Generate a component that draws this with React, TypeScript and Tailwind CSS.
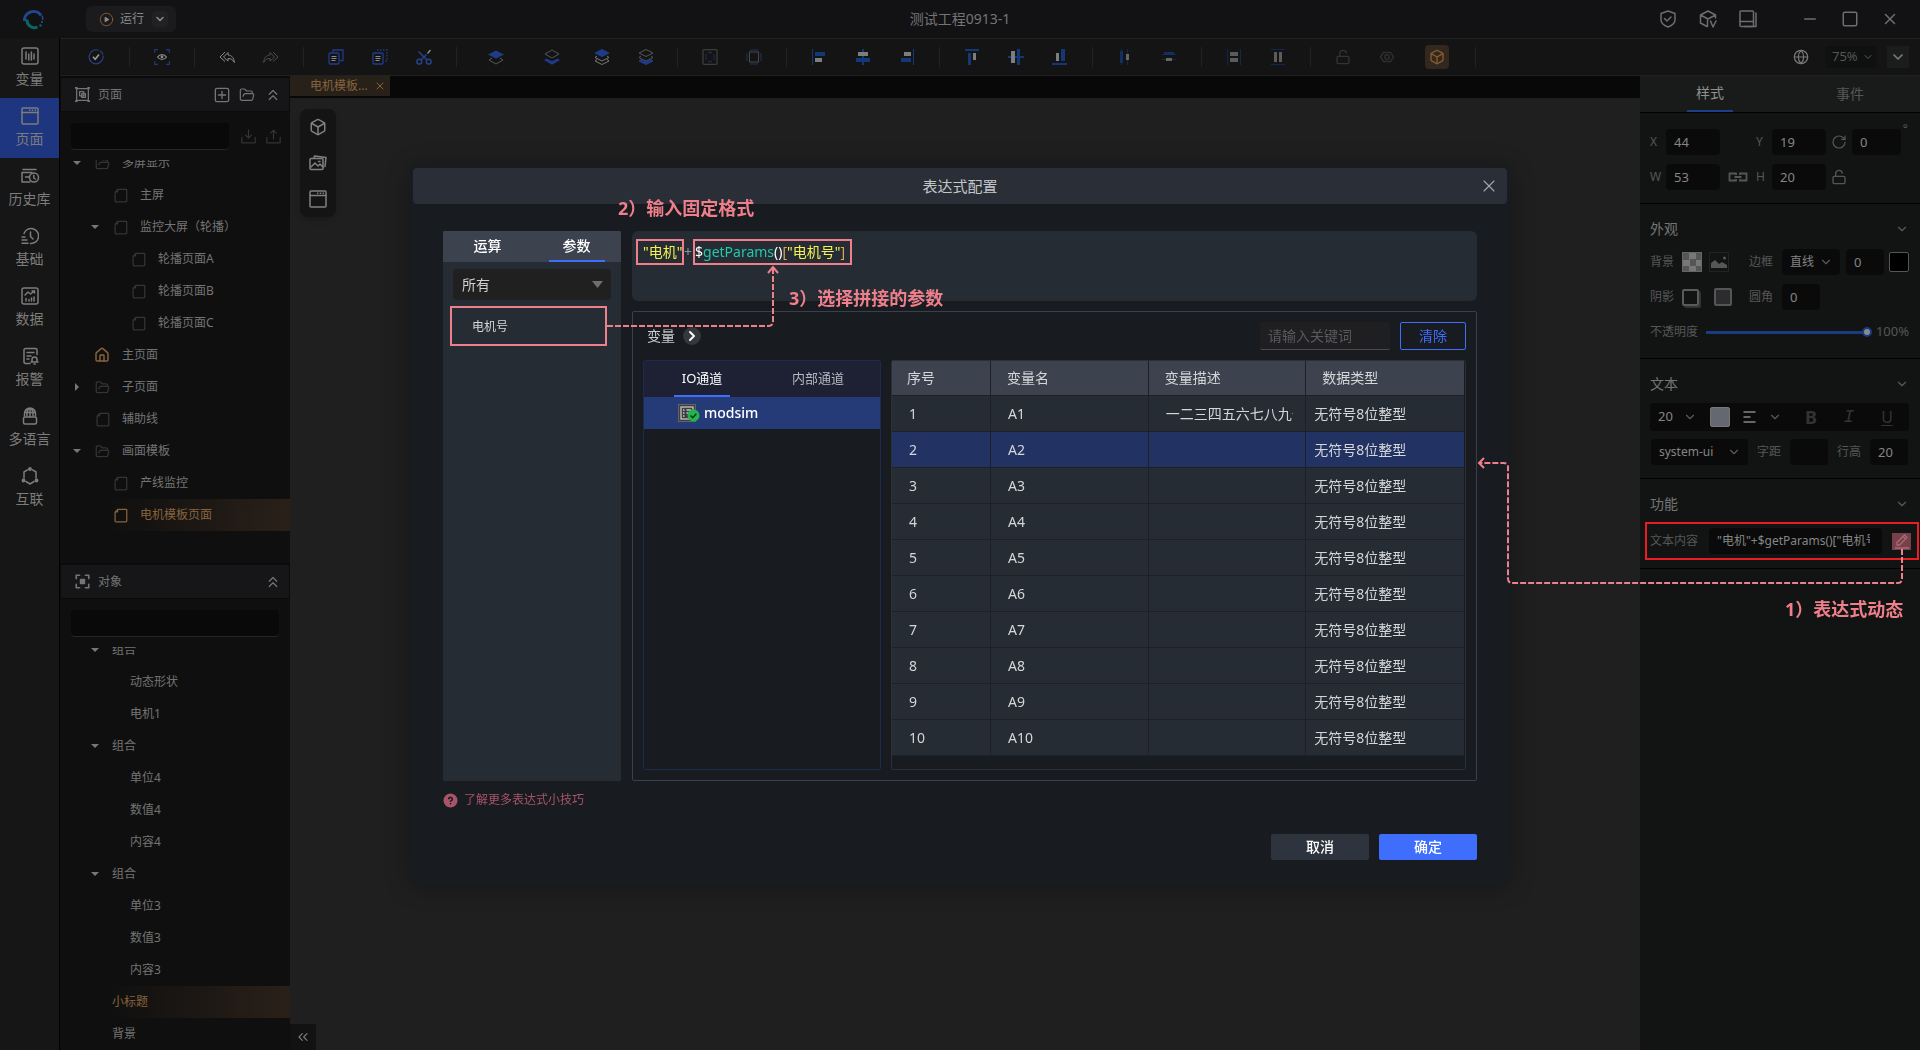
import React from "react";
import {
  Box,
  ChevronDown,
  ChevronRight,
  ChevronsLeft,
  ChevronsUp,
  CirclePlay,
  CircleHelp,
  FolderOpen,
  Globe,
  House,
  LockOpen,
  Minus,
  RotateCw,
  Square,
  X,
} from "lucide-react";

type Kids = { children?: React.ReactNode };

function Glyph({ children, className = "size-[18px]" }: Kids & { className?: string }) {
  return (
    <svg
      viewBox="0 0 18 18"
      className={className}
      fill="none"
      stroke="currentColor"
      strokeWidth="1.5"
      strokeLinecap="round"
      strokeLinejoin="round"
      aria-hidden="true"
    >
      {children}
    </svg>
  );
}

/* ---------- icons ---------- */

const PageGlyph = ({ className }: { className?: string }) => (
  <Glyph className={className}>
    <rect x="1" y="1" width="16" height="16" rx="1" />
    <path d="M1 5.5h16" />
    <path d="M8 3.3h7" strokeDasharray="1.4 1.4" strokeLinecap="butt" />
  </Glyph>
);

const VariableGlyph = () => (
  <Glyph>
    <rect x="1" y="1" width="16" height="16" rx="2" />
    <path d="M5 5v7M7.8 7v6M10.4 5v8M13 7v5" />
  </Glyph>
);

const HistoryGlyph = () => (
  <Glyph className="h-[18px] w-5">
    <path d="M2 2.500h13M1 5.500h10M1 5.500V15h8M4.500 10h3.500" />
    <circle cx="13" cy="10.500" r="4.500" />
    <path d="M12.800 8.300v2.700l1.500 1" />
  </Glyph>
);

const BaseGlyph = () => (
  <Glyph>
    <path d="M3 6.500A7.500 7.500 0 1 1 9.500 16.500" />
    <path d="M9.500 5v4.500l2.500 2.500M1 10h3M1 13h5M1 16.300h6" />
  </Glyph>
);

const DataGlyph = () => (
  <Glyph>
    <rect x="1" y="1" width="16" height="16" rx="2" />
    <path d="M4 8l3-3 2.500 2L13.500 4M11 4h2.500v2M5 14v-2.500M8 14v-1.500M10.500 14v-3M13 14v-4" />
  </Glyph>
);

const AlarmGlyph = () => (
  <Glyph>
    <path d="M16 7.500V3a1.500 1.500 0 0 0-1.500-1.500h-10A1.500 1.500 0 0 0 3 3v12a1.500 1.500 0 0 0 1.500 1.500H9M6 5.500h7M6 9h4M6 12h2" />
    <path d="M11 15v-2.500a2.500 2.500 0 0 1 5 0V15h1M10 15h7M13 17h1.200" />
  </Glyph>
);

const LanguageGlyph = () => (
  <Glyph>
    <path d="M3.500 9V6.500a5.500 5.500 0 0 1 11 0V9M9 1v9M6 9V6c0-2 1-4 3-5 2 1 3 3 3 5v3M4 5.500h10" />
    <rect x="2.500" y="10" width="13" height="7" rx="1.500" />
  </Glyph>
);

const ConnectGlyph = () => (
  <Glyph>
    <path d="M6.500 2.800L3 5v6M11.500 2.800L15 5v6M5 14.500L9 17l4-2.500" />
    <circle cx="9" cy="2" r="1.200" fill="currentColor" />
    <circle cx="2.500" cy="13.500" r="1.200" fill="currentColor" />
    <circle cx="15.500" cy="13.500" r="1.200" fill="currentColor" />
  </Glyph>
);

const FileGlyph = () => (
  <Glyph className="size-[15px]">
    <path d="M6 1.500h9.500a1 1 0 0 1 1 1v13a1 1 0 0 1-1 1h-12a1 1 0 0 1-1-1V5z" />
    <path d="M5.500 2v2.500H3" />
  </Glyph>
);

const PagesGlyph = () => (
  <Glyph className="size-[15px]">
    <path d="M2 2h14v14H2z" />
    <path d="M5.500 5.500h5v5h-5zM8 8h4.500v4.500H8z" />
    <path d="M1 1h1M16 1h1M1 17h1M16 17h1" strokeWidth="2.500" />
  </Glyph>
);

const FocusGlyph = () => (
  <Glyph className="size-[15px]">
    <path d="M1.500 5.500v-4h4M12.500 1.500h4v4M16.500 12.500v4h-4M5.500 16.500h-4v-4" strokeWidth="2" />
    <rect x="6.500" y="6.500" width="5" height="5" fill="currentColor" />
  </Glyph>
);

const TrayGlyph = ({ up = false }: { up?: boolean }) => (
  <Glyph className="size-[15px]">
    <path d="M1 10v6.500h16V10" />
    <path d={up ? "M9 12V2M5.500 5L9 1.500 12.500 5" : "M9 1v10M5.500 7.500L9 11l3.500-3.500"} />
  </Glyph>
);

const PlusBoxGlyph = () => (
  <Glyph className="size-4">
    <rect x="1.500" y="1.500" width="15" height="15" rx="2" />
    <path d="M9 5v8M5 9h8" />
  </Glyph>
);

const GalleryGlyph = () => (
  <Glyph className="size-[18px]">
    <path d="M5 4l.5-2 11.500 1.500-1 9" />
    <rect x="1" y="4.500" width="13" height="11" rx="1" />
    <path d="M2 13l4-4 3 3 2-2 3 3M9.500 7.500h1.500" />
  </Glyph>
);

const Mono = ({ children }: Kids) => (
  <svg viewBox="0 0 16 16" className="size-4" fill="none" aria-hidden="true">
    {children}
  </svg>
);

const top = "M8 0.500L15 4 8 7.500 1 4z";
const blue = "#1f3b8c";
const deep = "#123878";
const grey = "#7d7d7d";
const dim = "#10284f";

const LayerIcon = ({ kind }: { kind: 0 | 1 | 2 | 3 }) => (
  <Mono>
    {kind === 0 && (
      <>
        <path d="M8 1.500L16 5.500 8 9.500 0 5.500z" fill={blue} />
        <path d="M4 9L1 11l7 4 7-4-3-2" stroke="#555" />
      </>
    )}
    {kind === 1 && (
      <>
        <path d="M8 1l7 4-7 4-7-4z" stroke="#555" />
        <path d="M0 11l2.500-1.500L8 12.300l5.500-2.800L16 11l-8 4.800z" fill={blue} />
      </>
    )}
    {kind === 2 && (
      <>
        <path d={top} fill={blue} stroke={blue} />
        <path d="M3 7L1 8.500l7 3.500 7-3.500L13 7M3 10.500L1 12l7 3.500 7-3.500-2-1.500" stroke="#777" />
      </>
    )}
    {kind === 3 && (
      <>
        <path d={top} stroke="#555" />
        <path d="M3 7L1 8.500l7 3.500 7-3.500L13 7" stroke="#555" />
        <path d="M3 10.500L1 12l7 3.500 7-3.500-2-1.500-5 2.500z" fill={blue} stroke={blue} />
      </>
    )}
  </Mono>
);

/* Bars are [x, y, width, height, colour]. */
type Bar = [number, number, number, number, string];
const Bars = ({ bars }: { bars: Bar[] }) => (
  <Mono>
    {bars.map(([x, y, w, h, c], i) => (
      <rect key={i} x={x} y={y} width={w} height={h} fill={c} />
    ))}
  </Mono>
);

/* ---------- toolbar ---------- */

function Tool({ label, children, className = "w-11" }: Kids & { label: string; className?: string }) {
  return (
    <button type="button" aria-label={label} className={`flex h-6 shrink-0 items-center justify-center ${className}`}>
      {children}
    </button>
  );
}

const Group = ({ children }: Kids) => (
  <div className="flex h-5 shrink-0 items-center border-r border-[#222] px-2.5">{children}</div>
);

function Toolbar() {
  return (
    <div className="flex h-[38px] shrink-0 items-center border-y border-[#202020] bg-[#141414] pr-[11px]">
      <div className="ml-[3px] flex items-center">
        <Group>
          <Tool label="校验" className="w-[46px]">
            <Mono>
              <path d="M10.500 1.200A7 7 0 1 0 15 6.500" stroke="#27418a" strokeWidth="1.200" />
              <path d="M12 1.800A7 7 0 0 1 15 5.500" stroke="#27418a" strokeWidth="1.200" />
              <path d="M5 7.800l2.200 2.400L11 5.500" stroke="#999" strokeWidth="1.600" />
            </Mono>
          </Tool>
        </Group>
        <Group>
          <Tool label="预览">
            <Mono>
              <path d="M.7 4V.7H4M12 .7h3.300V4M15.300 12v3.300H12M4 15.300H.7V12" stroke="#22366e" strokeWidth="1.300" />
              <path d="M3.500 8c2.300-3.300 6.700-3.300 9 0-2.300 3.300-6.700 3.300-9 0z" stroke="#888" strokeWidth="1.200" />
              <circle cx="8" cy="8" r="1.400" fill="#888" />
            </Mono>
          </Tool>
        </Group>
        <Group>
          <Tool label="撤销">
            <Mono>
              <path d="M6 3L1 8l5 4.500M9 3.500L4.500 8 9 12V9.500c3 0 5 1 6.300 4C15 9 13 6.300 9 6z" stroke="#888" />
            </Mono>
          </Tool>
          <Tool label="重做">
            <Mono>
              <path d="M10 3l5 5-5 4.500M7 3.500L11.500 8 7 12V9.500c-3 0-5 1-6.300 4C1 9 3 6.300 7 6z" stroke="#4c4c4c" />
            </Mono>
          </Tool>
        </Group>
        <Group>
          <Tool label="复制">
            <Mono>
              <path d="M5 3.500V1h10v10.500h-3" stroke={blue} strokeWidth="1.300" />
              <rect x="1" y="4" width="10" height="11" rx="1" stroke={blue} strokeWidth="1.300" />
              <path d="M3.500 7.500h5M3.500 9.500h5M3.500 11.500h4" stroke="#888" />
            </Mono>
          </Tool>
          <Tool label="粘贴">
            <Mono>
              <path d="M5 1h10v11h-3" stroke={blue} strokeWidth="1.300" strokeDasharray="1.500 1.500" />
              <rect x="1" y="4" width="10" height="11" rx="1" stroke={blue} strokeWidth="1.300" />
              <path d="M3.500 7.500h5M3.500 9.500h5M3.500 11.500h4" stroke="#888" />
            </Mono>
          </Tool>
          <Tool label="剪切">
            <Mono>
              <path d="M2.500 2.500l8.500 8.500M5 11l5.500-5.500" stroke="#27418a" strokeWidth="1.500" />
              <path d="M11.500 4.500L14.500 1" stroke="#888" strokeWidth="1.500" />
              <circle cx="3.300" cy="12.700" r="2.400" stroke="#27418a" strokeWidth="1.500" />
              <circle cx="12.700" cy="12.700" r="2.400" stroke="#27418a" strokeWidth="1.500" />
            </Mono>
          </Tool>
        </Group>
        <Group>
          <Tool label="置顶" className="w-[58px]"><LayerIcon kind={0} /></Tool>
          <Tool label="置底" className="w-[54px]"><LayerIcon kind={1} /></Tool>
          <Tool label="上移一层" className="w-[46px]"><LayerIcon kind={2} /></Tool>
          <Tool label="下移一层" className="w-[42px]"><LayerIcon kind={3} /></Tool>
        </Group>
        <Group>
          <Tool label="组合">
            <Mono>
              <rect x="1" y=".7" width="14" height="14.600" rx="1" stroke="#3a3c3a" strokeWidth="1.300" />
              <path d="M6 3.500h4M6 12.500h4M4 5v1M12 5v1M4 10v1M12 10v1" stroke="#1b2a52" strokeWidth="1.300" />
              <path d="M4 6v4M12 6v4" stroke="#1b2a52" />
            </Mono>
          </Tool>
          <Tool label="取消组合">
            <Mono>
              <path d="M4 1h8M4 15h8M1 4v8M15 4v8" stroke="#18233f" strokeWidth="2" />
              <rect x="3.500" y="3" width="9" height="10" stroke="#4a4a40" />
            </Mono>
          </Tool>
        </Group>
        <Group>
          <Tool label="左对齐"><Bars bars={[[1, 0, 1, 16, deep], [4, 3, 10, 4, deep], [4, 9, 7, 4, grey]]} /></Tool>
          <Tool label="水平居中"><Bars bars={[[7, 0, 2, 16, deep], [3, 3, 10, 4, grey], [1, 9, 14, 4, deep]]} /></Tool>
          <Tool label="右对齐"><Bars bars={[[14, 0, 1, 16, deep], [5, 3, 7, 4, grey], [2, 9, 10, 4, deep]]} /></Tool>
        </Group>
        <Group>
          <Tool label="顶对齐"><Bars bars={[[1, 0, 14, 2, deep], [4, 4, 3, 12, deep], [9, 4, 3, 7, grey]]} /></Tool>
          <Tool label="垂直居中"><Bars bars={[[0, 7, 16, 2, deep], [3, 2, 4, 12, grey], [9, 0, 3, 16, deep]]} /></Tool>
          <Tool label="底对齐"><Bars bars={[[0, 14, 15, 2, deep], [4, 4, 3, 8, grey], [9, 0, 4, 12, deep]]} /></Tool>
        </Group>
        <Group>
          <Tool label="水平分布"><Bars bars={[[4, 0, 1, 16, dim], [3, 2, 3, 12, "#132e60"], [10, 0, 1, 16, dim], [9, 5, 3, 6, "#666"]]} /></Tool>
          <Tool label="垂直分布"><Bars bars={[[1, 5, 14, 1, dim], [3, 3, 10, 3, "#132e60"], [1, 10, 14, 1, dim], [5, 9, 6, 3, "#666"]]} /></Tool>
        </Group>
        <Group>
          <Tool label="等宽"><Bars bars={[[1, 0, 1, 16, dim], [14, 0, 1, 16, dim], [4, 3, 8, 4, "#5b5b5b"], [4, 9, 8, 4, "#5b5b5b"]]} /></Tool>
          <Tool label="等高"><Bars bars={[[1, 0, 14, 1, dim], [1, 15, 14, 1, dim], [4, 3, 3, 10, "#5b5b5b"], [9, 3, 3, 10, "#5b5b5b"]]} /></Tool>
        </Group>
        <Group>
          <Tool label="解锁"><LockOpen className="size-4 text-[#333]" strokeWidth={2} /></Tool>
          <Tool label="显示">
            <Mono>
              <path d="M1.500 8L4.500 3.500h7L14.500 8l-3 4.500h-7z" stroke="#2d2d30" strokeWidth="1.500" strokeLinejoin="round" />
              <circle cx="8" cy="8" r="2.300" stroke="#2d2d30" strokeWidth="1.500" />
            </Mono>
          </Tool>
          <Tool label="三维" className="w-14">
            <span className="flex size-6 items-center justify-center rounded bg-[#33281d] text-[#8a5c31]">
              <Box className="size-4" strokeWidth={2} />
            </span>
          </Tool>
        </Group>
      </div>
      <div className="ml-auto flex items-center">
        <button type="button" aria-label="语言" className="mr-4 text-[#7a7a7a]">
          <Globe className="size-4" strokeWidth={1.8} />
        </button>
        <Select
          label="缩放"
          value="75%"
          options={["75%", "100%"]}
          wrapper="mr-2.5"
          className="h-[22px] w-[52px] bg-[#0e1110] pl-[7px] text-[13px] text-[#565656]"
          chevron="size-3 right-[3px]"
        />
        <button type="button" aria-label="更多" className="flex size-[22px] items-center justify-center bg-[#1b1d1d] text-[#7a7a7a]">
          <ChevronDown className="size-4" strokeWidth={2.500} />
        </button>
      </div>
    </div>
  );
}

/* ---------- form controls ---------- */

function Select({
  label,
  value,
  options,
  className,
  wrapper = "",
  chevron = "size-3.5 right-[7px]",
}: {
  label: string;
  value: string;
  options: string[];
  className: string;
  wrapper?: string;
  chevron?: string;
}) {
  return (
    <span className={`relative inline-flex items-center ${wrapper}`}>
      <select aria-label={label} defaultValue={value} className={`appearance-none rounded outline-none ${className}`}>
        {options.map((o) => (
          <option key={o}>{o}</option>
        ))}
      </select>
      <ChevronDown className={`pointer-events-none absolute text-[#5a5a5a] ${chevron}`} strokeWidth={2} />
    </span>
  );
}

function Field({ label, value, className }: { label: string; value: string; className: string }) {
  return (
    <input
      aria-label={label}
      defaultValue={value}
      className={`h-[26px] min-w-0 rounded bg-[#0a0a0a] px-2 text-[13px] text-[#858585] outline-none ${className}`}
    />
  );
}

/* ---------- header ---------- */

function Header() {
  return (
    <header className="grid h-[38px] shrink-0 grid-cols-[1fr_auto_1fr] items-center bg-[#121214]">
      <div className="flex items-center pl-[22px]">
        <svg viewBox="0 0 22 22" className="size-[22px]" fill="none" aria-label="Logo">
          <path d="M2.500 13A9 9 0 0 1 19 7.500" stroke="#22488f" strokeWidth="3" />
          <path d="M20 7.500a9 9 0 0 1 .6 4.500" stroke="#22488f" strokeWidth="1.500" />
          <path d="M5 11.500A7.500 7.500 0 0 0 15.500 19" stroke="#0b6560" strokeWidth="3" />
          <circle cx="18.500" cy="17.500" r="1.200" fill="#0b6560" />
          <circle cx="20" cy="14" r="1" fill="#0b6560" />
        </svg>
        <div className="ml-[42px] flex h-[26px] w-[90px] items-center rounded-md bg-[#1b1b1d] pl-[13px]">
          <button type="button" className="flex items-center gap-1.5 text-xs text-[#8b8b8b]">
            <CirclePlay className="size-[15px] text-[#80592f] [&>path]:fill-[#8b8b8b] [&>path]:stroke-none" strokeWidth={1.600} />
            运行
          </button>
          <button type="button" aria-label="运行选项" className="ml-2 flex size-4 items-center justify-center rounded-sm bg-[#212123] text-[#8b8b8b]">
            <ChevronDown className="size-3" strokeWidth={3} />
          </button>
        </div>
      </div>
      <h1 className="text-sm text-[#747474]">测试工程0913-1</h1>
      <div className="flex items-center justify-end pr-[21px] text-[#6d6d6d]">
        <div className="mr-11 flex gap-[22px]">
          <button type="button" aria-label="安全">
            <Glyph><path d="M9 1l7 2.500V10c0 3-3 5.500-7 7-4-1.500-7-4-7-7V3.500zM5.500 8.500L8 11l4-4" /></Glyph>
          </button>
          <button type="button" aria-label="版本">
            <Glyph><path d="M8 16.500L1.500 13V5L9 1l7.500 4v3M1.500 5L9 9l7.500-4M8.500 9v7.500M11.500 11l2.500 6 3-6" /></Glyph>
          </button>
          <button type="button" aria-label="布局">
            <Glyph><rect x="1" y="1" width="13.500" height="15.500" rx="1" /><path d="M1 11.500h13.500M17 3v13.500H5" /></Glyph>
          </button>
        </div>
        <div className="flex gap-[22px]">
          <button type="button" aria-label="最小化"><Minus className="size-[18px]" strokeWidth={2} /></button>
          <button type="button" aria-label="最大化"><Square className="size-[18px]" strokeWidth={2} /></button>
          <button type="button" aria-label="关闭"><X className="size-[18px]" strokeWidth={2} /></button>
        </div>
      </div>
    </header>
  );
}

/* ---------- left side ---------- */

const nav: { label: string; icon: React.ReactNode }[] = [
  { label: "变量", icon: <VariableGlyph /> },
  { label: "页面", icon: <PageGlyph /> },
  { label: "历史库", icon: <HistoryGlyph /> },
  { label: "基础", icon: <BaseGlyph /> },
  { label: "数据", icon: <DataGlyph /> },
  { label: "报警", icon: <AlarmGlyph /> },
  { label: "多语言", icon: <LanguageGlyph /> },
  { label: "互联", icon: <ConnectGlyph /> },
];

const indent = ["pl-[8px]", "pl-[26px]", "pl-[44px]"];

type Node = { label: string; level: number; icon?: "folder" | "file" | "home"; caret?: "down" | "right"; active?: boolean };

const pages: Node[] = [
  { label: "多屏显示", level: 0, icon: "folder", caret: "down" },
  { label: "主屏", level: 1, icon: "file" },
  { label: "监控大屏（轮播）", level: 1, icon: "file", caret: "down" },
  { label: "轮播页面A", level: 2, icon: "file" },
  { label: "轮播页面B", level: 2, icon: "file" },
  { label: "轮播页面C", level: 2, icon: "file" },
  { label: "主页面", level: 0, icon: "home" },
  { label: "子页面", level: 0, icon: "folder", caret: "right" },
  { label: "辅助线", level: 0, icon: "file" },
  { label: "画面模板", level: 0, icon: "folder", caret: "down" },
  { label: "产线监控", level: 1, icon: "file" },
  { label: "电机模板页面", level: 1, icon: "file", active: true },
];

const objects: Node[] = [
  { label: "组合", level: 1, caret: "down" },
  { label: "动态形状", level: 2 },
  { label: "电机1", level: 2 },
  { label: "组合", level: 1, caret: "down" },
  { label: "单位4", level: 2 },
  { label: "数值4", level: 2 },
  { label: "内容4", level: 2 },
  { label: "组合", level: 1, caret: "down" },
  { label: "单位3", level: 2 },
  { label: "数值3", level: 2 },
  { label: "内容3", level: 2 },
  { label: "小标题", level: 1, active: true },
  { label: "背景", level: 1 },
];

function TreeRow({ node }: { node: Node }) {
  const tone = node.active
    ? "text-[#87633c] bg-gradient-to-r from-[#0f0f0f] from-20% to-[#2a2019]"
    : "text-[#747474]";
  return (
    <li className={`flex h-8 items-center text-xs whitespace-nowrap ${indent[node.level]} ${tone}`}>
      <span className="flex w-[18px] justify-center">
        {node.caret === "down" && <svg viewBox="0 0 8 4" className="h-1 w-2"><path d="M0 0h8L4 4z" fill="#777" /></svg>}
        {node.caret === "right" && <svg viewBox="0 0 4 8" className="h-2 w-1"><path d="M0 0v8l4-4z" fill="#777" /></svg>}
      </span>
      {node.icon ? (
        <span className={`mr-1 flex w-8 justify-center ${node.active || node.icon === "home" ? "text-[#87633c]" : "text-[#353535]"}`}>
          {node.icon === "folder" && <FolderOpen className="size-[15px]" strokeWidth={2} />}
          {node.icon === "file" && <FileGlyph />}
          {node.icon === "home" && <House className="size-4" strokeWidth={2.200} />}
        </span>
      ) : (
        <span className="w-2" />
      )}
      {node.label}
    </li>
  );
}

function PanelHeader({ icon, title, children }: Kids & { icon: React.ReactNode; title: string }) {
  return (
    <div className="flex h-9 shrink-0 items-center border border-t-2 border-[#0b0b0b] bg-[#161618] pr-[7px] pl-3.5 text-[#747474]">
      {icon}
      <h2 className="ml-2 text-xs">{title}</h2>
      <div className="ml-auto flex items-center gap-[9px]">{children}</div>
    </div>
  );
}

function SidePanel() {
  return (
    <aside className="flex w-[230px] shrink-0 flex-col bg-[#0f0f0f]">
      <PanelHeader icon={<PagesGlyph />} title="页面">
        <button type="button" aria-label="新建"><PlusBoxGlyph /></button>
        <button type="button" aria-label="打开"><FolderOpen className="size-4" strokeWidth={1.800} /></button>
        <button type="button" aria-label="收起"><ChevronsUp className="size-[18px]" strokeWidth={1.600} /></button>
      </PanelHeader>
      <div className="flex items-center gap-3 pt-[11px] pr-[9px] pl-[11px]">
        <input aria-label="搜索页面" className="h-[27px] min-w-0 flex-1 rounded border-b border-[#262626] bg-[#090909] px-2 text-xs text-[#777] outline-none" />
        <div className="flex gap-2.5 text-[#333]">
          <button type="button" aria-label="导入"><TrayGlyph /></button>
          <button type="button" aria-label="导出"><TrayGlyph up /></button>
        </div>
      </div>
      <div className="mt-2.5 h-[403px] shrink-0 overflow-hidden">
        <ul className="-mt-[13px]">
          {pages.map((n) => <TreeRow key={n.label} node={n} />)}
        </ul>
      </div>
      <PanelHeader icon={<FocusGlyph />} title="对象">
        <button type="button" aria-label="收起"><ChevronsUp className="size-[18px]" strokeWidth={1.600} /></button>
      </PanelHeader>
      <div className="flex pt-[11px] pr-[11px] pl-[11px]">
        <input aria-label="搜索对象" className="h-[27px] min-w-0 flex-1 rounded border-b border-[#262626] bg-[#090909] px-2 text-xs text-[#777] outline-none" />
      </div>
      <div className="mt-2.5 min-h-0 flex-1 overflow-hidden">
        <ul className="-mt-[13px]">
          {objects.map((n, i) => <TreeRow key={i} node={n} />)}
        </ul>
      </div>
    </aside>
  );
}

/* ---------- right side ---------- */

function Section({ title, children }: Kids & { title: string }) {
  return (
    <section className="flex flex-col border-b border-black pt-[15px] pr-[11px] pb-3 pl-2.5">
      <div className="flex h-5 items-center justify-between">
        <h3 className="text-sm text-[#747474]">{title}</h3>
        <button type="button" aria-label={`收起${title}`} className="text-[#5a5a5a]">
          <ChevronDown className="size-3.5" strokeWidth={2} />
        </button>
      </div>
      {children}
    </section>
  );
}

const checker =
  "bg-[repeating-conic-gradient(#777_0_25%,#555_0_50%)] bg-[length:13px_13px]";

function Properties() {
  return (
    <aside className="w-[280px] shrink-0 bg-[#121414] text-xs text-[#565656]">
      <div role="tablist" className="grid h-[37px] grid-cols-2 border-b border-black bg-[#191b1b] text-sm">
        <button type="button" role="tab" aria-selected="true" className="flex justify-center text-[#8f8f8f]">
          <span className="flex h-9 w-[46px] items-center justify-center border-b-2 border-[#1c3f8a]">样式</span>
        </button>
        <button type="button" role="tab" aria-selected="false" className="h-9">事件</button>
      </div>
      <section className="relative border-b border-black pt-4 pr-[11px] pb-[13px] pl-2.5">
        <div className="grid grid-cols-[16px_54px_36px_16px_54px_26px_49px] items-center gap-y-[9px]">
          <span>X</span>
          <Field label="X" value="44" className="w-full" />
          <span />
          <span>Y</span>
          <Field label="Y" value="19" className="w-full" />
          <RotateCw className="size-4 justify-self-center" strokeWidth={1.800} />
          <Field label="旋转角度" value="0" className="w-full" />
          <span>W</span>
          <Field label="宽" value="53" className="w-full" />
          <svg viewBox="0 0 20 10" className="h-2.5 w-5 justify-self-center" fill="none" stroke="currentColor" strokeWidth="1.800" aria-hidden="true">
            <path d="M8 3V1.500H1.500v7H8V7M12 3V1.500h6.500v7H12V7M6.500 5h7" />
          </svg>
          <span>H</span>
          <Field label="高" value="20" className="w-full" />
          <button type="button" aria-label="锁定" className="justify-self-center"><LockOpen className="size-4" strokeWidth={2} /></button>
        </div>
        <span className="absolute top-2 right-3">°</span>
      </section>
      <Section title="外观">
        <div className="mt-2.5 grid h-[26px] grid-cols-[32px_27px_40px_33px_auto] items-center">
          <span>背景</span>
          <button type="button" aria-label="背景颜色" className={`size-5 border border-[#666] ${checker}`} />
          <button type="button" aria-label="背景图片" className="flex size-5 items-center justify-center border border-[#222]">
            <svg viewBox="0 0 16 12" className="h-3 w-4" fill="currentColor" aria-hidden="true">
              <path d="M0 12V7l4-3 4 4 3-2 5 3v3z" /><circle cx="13.500" cy="2" r="1.500" />
            </svg>
          </button>
          <span>边框</span>
          <div className="flex items-center">
            <Select label="边框样式" value="直线" options={["直线", "虚线"]} className="h-[26px] w-[58px] bg-[#0a0a0a] pl-2 text-xs text-[#858585]" />
            <Field label="边框宽度" value="0" className="mr-[5px] ml-1.5 w-[38px]" />
            <button type="button" aria-label="边框颜色" className="size-5 rounded-xs border border-[#555] bg-black" />
          </div>
        </div>
        <div className="mt-[9px] grid h-[26px] grid-cols-[32px_32px_35px_33px_auto] items-center">
          <span>阴影</span>
          <button type="button" aria-label="外阴影" className="size-[17px] rounded-xs border-2 border-[#5a5a5a] shadow-[2px_2px_0_#333]" />
          <button type="button" aria-label="内阴影" className="size-[18px] rounded-xs border-2 border-[#555] bg-[#2c2c2e]" />
          <span>圆角</span>
          <Field label="圆角" value="0" className="w-[38px]" />
        </div>
        <div className="mt-3 mb-1 flex h-5 items-center">
          <label htmlFor="opacity">不透明度</label>
          <input
            id="opacity"
            type="range"
            defaultValue={100}
            className="ml-2 h-[3px] min-w-0 flex-1 appearance-none bg-[#183b82] [&::-webkit-slider-thumb]:size-2.5 [&::-webkit-slider-thumb]:appearance-none [&::-webkit-slider-thumb]:rounded-full [&::-webkit-slider-thumb]:border-2 [&::-webkit-slider-thumb]:border-[#183b82] [&::-webkit-slider-thumb]:bg-[#8a8a8a]"
          />
          <span className="ml-1 text-[13px]">100%</span>
        </div>
      </Section>
      <Section title="文本">
        <div className="mt-[9px] flex h-7 items-center rounded bg-[#0a0a0a] pr-[15px]">
          <Select label="字号" value="20" options={["20", "24"]} className="h-7 w-[50px] pl-2 text-[13px] text-[#858585]" chevron="size-3.5 right-[3px]" />
          <button type="button" aria-label="文字颜色" className="ml-2.5 size-5 rounded-xs border border-[#777] bg-[#646871]" />
          <button type="button" aria-label="对齐" className="ml-3 flex items-center gap-3">
            <svg viewBox="0 0 14 12" className="h-3 w-3.5" stroke="#858585" strokeWidth="1.300" aria-hidden="true"><path d="M1.500 1h12M1.500 6h7M1.500 11h12" /></svg>
            <ChevronDown className="size-3.5 text-[#5a5a5a]" strokeWidth={2} />
          </button>
          <div className="ml-auto flex gap-6 text-[#333]">
            <button type="button" aria-label="加粗" className="w-3.5 text-lg leading-5 font-bold">B</button>
            <button type="button" aria-label="斜体" className="w-3.5 font-['Liberation_Mono'] text-lg leading-5 italic">I</button>
            <button type="button" aria-label="下划线" className="w-3.5 text-base leading-5 underline underline-offset-2">U</button>
          </div>
        </div>
        <div className="mt-2 mb-px flex h-[26px] items-center pl-px">
          <Select label="字体" value="system-ui" options={["system-ui", "serif"]} className="h-[26px] w-[97px] bg-[#0a0a0a] pl-2 text-xs text-[#858585]" />
          <span className="ml-[9px]">字距</span>
          <Field label="字距" value="" className="ml-[9px] w-[38px]" />
          <span className="ml-[9px]">行高</span>
          <Field label="行高" value="20" className="ml-[9px] w-[38px]" />
        </div>
      </Section>
      <section className="border-b border-black pt-[15px] pb-2">
        <div className="flex h-5 items-center justify-between pr-[11px] pl-2.5">
          <h3 className="text-sm text-[#747474]">功能</h3>
          <button type="button" aria-label="收起功能" className="text-[#5a5a5a]"><ChevronDown className="size-3.5" strokeWidth={2} /></button>
        </div>
        <div className="mt-2 mr-px ml-[5px] flex h-[38px] items-center border-2 border-[#ea1c24] pr-1.5 pl-[3px]">
          <label htmlFor="content" className="shrink-0">文本内容</label>
          <div className="ml-[11px] flex h-[26px] min-w-0 flex-1 rounded bg-[#0a0a0a] pr-3 pl-2">
            <input id="content" defaultValue={'"电机"+$getParams()["电机号"]'} className="w-full min-w-0 bg-transparent text-[#858585] outline-none" />
          </div>
          <button type="button" aria-label="编辑表达式" className="ml-2.5 flex h-[17px] w-[19px] shrink-0 items-center justify-center bg-[#78404a] text-[#a86b74]">
            <svg viewBox="0 0 16 16" className="size-4" fill="none" stroke="currentColor" strokeWidth="1.300" aria-hidden="true">
              <path d="M3 9.500L10.500 2 13 4.500 5.500 12H3zM9 3.500L11.500 6M1 15h14" />
            </svg>
          </button>
        </div>
      </section>
    </aside>
  );
}

/* ---------- expression dialog ---------- */

const rows = Array.from({ length: 10 }, (_, i) => ({
  no: i + 1,
  name: `A${i + 1}`,
  desc: i === 0 ? "一二三四五六七八九十" : "",
  type: "无符号8位整型",
}));

function VariableTable() {
  const head = "border-r border-b border-[#1d2027] text-left font-normal last:border-r-0";
  const cell = "h-9 border-r border-b border-[#1e2028] last:border-r-0";
  return (
    <div className="min-w-0 flex-1 rounded-xs border border-[#2c2f33] pr-px pb-[13px]">
      <table className="w-full table-fixed border-separate border-spacing-0 text-sm leading-5 text-[#d4d6d9]">
        <colgroup>
          <col className="w-[99px]" />
          <col />
          <col />
          <col />
        </colgroup>
        <thead>
          <tr className="h-[35px] bg-[#3d434e]">
            <th className={`${head} pl-[15px]`}>序号</th>
            <th className={`${head} pl-4`}>变量名</th>
            <th className={`${head} pl-4`}>变量描述</th>
            <th className={`${head} pl-4`}>数据类型</th>
          </tr>
        </thead>
        <tbody>
          {rows.map((r) => (
            <tr key={r.no} className={r.no === 2 ? "bg-[#213263]" : "bg-[#252c34]"}>
              <td className={`${cell} pl-[17px]`}>{r.no}</td>
              <td className={`${cell} pl-[17px]`}>{r.name}</td>
              <td className={`${cell} pr-3 pl-[17px]`}>
                <div className="overflow-hidden whitespace-nowrap">{r.desc}</div>
              </td>
              <td className={`${cell} pl-2`}>{r.type}</td>
            </tr>
          ))}
        </tbody>
      </table>
    </div>
  );
}

const Note = ({ children, className }: Kids & { className: string }) => (
  <p className={`pointer-events-none absolute text-lg leading-6 font-bold whitespace-nowrap text-[#ef7f8b] ${className}`}>{children}</p>
);

function ExpressionDialog() {
  return (
    <div
      role="dialog"
      aria-label="表达式配置"
      className="relative w-full max-w-[1100px] rounded-lg bg-[#181b1f] p-[3px] pb-[25px] shadow-[0_2px_24px_rgba(0,0,0,0.3)]"
    >
      <div className="flex h-9 items-center rounded bg-[#2a2e37] px-2">
        <h2 className="flex-1 pl-5 text-center text-[15px] text-[#c4c6ca]">表达式配置</h2>
        <button type="button" aria-label="关闭" className="text-[#a5a7ab]"><X className="size-5" strokeWidth={1.300} /></button>
      </div>

      <div className="flex gap-[11px] px-[30px] pt-[27px]">
        <div className="w-[178px] shrink-0 bg-[#252c33] text-sm">
          <div role="tablist" className="grid h-[31px] grid-cols-2 rounded-t-xs bg-[#3d434e] text-white">
            <button type="button" role="tab" aria-selected="false" className="h-[30px] font-medium">运算</button>
            <button type="button" role="tab" aria-selected="true" className="flex justify-center font-medium">
              <span className="flex h-[31px] w-14 items-center justify-center border-b-2 border-[#3f6dfc]">参数</span>
            </button>
          </div>
          <div className="relative mx-2.5 mt-[7px] flex items-center">
            <select aria-label="参数分类" className="h-[31px] w-full appearance-none rounded bg-[#202020] pl-[9px] text-[#d0d0d0] outline-none">
              <option>所有</option>
            </select>
            <svg viewBox="0 0 11 7" className="pointer-events-none absolute right-2 h-[7px] w-[11px]"><path d="M0 0h11L5.500 7z" fill="#6f6f6f" /></svg>
          </div>
          <button type="button" className="mt-1.5 ml-[7px] h-10 w-[157px] border-2 border-[#ef7f8b] pt-px pl-5 text-left text-xs text-[#d4d6d9]">
            电机号
          </button>
        </div>

        <div className="flex min-w-0 flex-1 flex-col gap-2.5">
          <div role="textbox" aria-label="表达式" className="h-[70px] rounded-md bg-[#252c33] pt-2 pl-1 text-sm">
            <code className="flex items-center font-['Noto_Sans','Noto_Sans_CJK_SC',sans-serif] whitespace-nowrap">
              <span className="flex h-[26px] w-12 items-center border-2 border-[#ef7f8b] pl-[5px] text-[#f3f153]">"电机"</span>
              <span className="w-[9px] text-[#8a9199]">+</span>
              <span className="flex h-[26px] w-[159px] items-center border-2 border-[#ef7f8b]">
                <span className="text-white">$</span>
                <span className="text-[#23c8a8]">getParams</span>
                <span className="text-white">()</span>
                <span className="text-[#e0a45c]">[</span>
                <span className="text-[#f3f153]">"电机号"</span>
                <span className="text-[#e0a45c]">]</span>
              </span>
            </code>
          </div>

          <div className="rounded-xs border border-[#3a404b] p-2.5">
            <div className="flex h-7 items-center">
              <span className="pl-1 text-sm text-[#c9cbce]">变量</span>
              <button type="button" aria-label="展开" className="ml-2 flex size-[18px] items-center justify-center rounded-full bg-[#35383b] text-white">
                <ChevronRight className="size-4" strokeWidth={3} />
              </button>
              <input
                aria-label="关键词"
                placeholder="请输入关键词"
                className="ml-auto h-7 w-[130px] rounded-xs border-b border-[#4a4a4e] bg-[#1f1f22] px-2 text-sm text-white outline-none placeholder:text-[#5a5a5c]"
              />
              <button type="button" className="ml-2.5 h-7 w-[66px] rounded-xs border border-[#3f6dfc] text-sm text-[#3f6dfc]">清除</button>
            </div>
            <div className="mt-2.5 flex gap-2.5">
              <div className="w-[238px] shrink-0 rounded-xs border border-[#1d2a4f]">
                <div role="tablist" className="grid h-9 grid-cols-2 bg-[#1d2133] pr-1 text-[13px] text-[#b4b7bd]">
                  <button type="button" role="tab" aria-selected="true" className="flex justify-center text-white">
                    <span className="flex h-9 w-14 items-center justify-center border-b-2 border-[#3f6dfc] pt-0.5">IO通道</span>
                  </button>
                  <button type="button" role="tab" aria-selected="false">内部通道</button>
                </div>
                <button type="button" className="flex h-8 w-full items-center bg-[#253b78] pl-[34px] text-sm font-medium text-white">
                  <svg viewBox="0 0 22 18" className="mr-1 h-[18px] w-[22px]" fill="none" aria-hidden="true">
                    <rect x=".5" y=".5" width="17" height="17" fill="#3c3f42" stroke="#65645f" />
                    <rect x="3" y="3" width="12" height="12" stroke="#c5c5c5" strokeWidth="1.300" />
                    <path d="M5 6h1.500M5 9h1.500M5 12h1.500M8.500 6h4.500M8.500 9h4.500" stroke="#c5c5c5" strokeWidth="1.500" />
                    <circle cx="15.500" cy="11.500" r="6" fill="#21b54d" />
                    <path d="M12.500 11.500l2.200 2.200 3.600-4" stroke="#10351d" strokeWidth="1.600" />
                  </svg>
                  modsim
                </button>
              </div>
              <VariableTable />
            </div>
          </div>
        </div>
      </div>

      <div className="mt-2.5 flex h-[18px] items-center px-[30px] text-xs text-[#a8546a]">
        <a href="#tips" className="flex items-center gap-1.5">
          <CircleHelp className="size-[15px] fill-[#a8546a] text-[#a8546a] [&>path]:stroke-[#181b1f]" strokeWidth={2.500} />
          了解更多表达式小技巧
        </a>
      </div>
      <div className="mt-[25px] flex justify-end gap-2.5 px-[30px] text-sm leading-[26px] font-medium text-white">
        <button type="button" className="h-[26px] w-[98px] rounded-xs bg-[#2e343e]">取消</button>
        <button type="button" className="h-[26px] w-[98px] rounded-xs bg-[#3f6dfc]">确定</button>
      </div>

      <Note className="top-[31px] left-[208px]">2）输入固定格式</Note>
      <Note className="top-[121px] left-[379px]">3）选择拼接的参数</Note>
      <svg viewBox="0 0 180 70" className="pointer-events-none absolute top-[100px] left-[197px] h-[70px] w-[180px]" fill="none" stroke="#ef7f8b" strokeWidth="2" aria-hidden="true">
        <path d="M0 61h162a4 4 0 0 0 4-4V2" strokeDasharray="6 2" />
        <path d="M161 8l5-6 5 6" />
      </svg>
    </div>
  );
}

/* ---------- page ---------- */

export default function App() {
  return (
    <div className="relative flex h-screen flex-col overflow-hidden bg-[#121214] font-['Noto_Sans','Noto_Sans_CJK_SC',sans-serif]">
      <Header />
      <div className="flex min-h-0 flex-1">
        <nav className="w-[60px] shrink-0 border-r border-black bg-[#161616]">
          {nav.map((n) => (
            <a
              key={n.label}
              href="#"
              className={`flex h-[60px] flex-col items-center gap-[5px] pt-[9px] text-sm leading-[18px] whitespace-nowrap text-[#7c7c7c] ${n.label === "页面" ? "bg-[#1e3680]" : ""}`}
            >
              {n.icon}
              {n.label}
            </a>
          ))}
        </nav>
        <div className="flex min-w-0 flex-1 flex-col">
          <Toolbar />
          <div className="flex min-h-0 flex-1">
            <SidePanel />
            <main className="relative flex min-w-0 flex-1 flex-col bg-[#1f1f1f]">
              <div className="h-[22px] shrink-0 bg-[#080808]">
                <div className="flex h-5 w-[100px] items-center bg-[#28211a] pl-5 text-xs text-[#87633c]">
                  <span>电机模板...</span>
                  <button type="button" aria-label="关闭标签" className="ml-1.5"><X className="size-3" strokeWidth={2} /></button>
                </div>
              </div>
              <div className="mt-[11px] ml-2.5 flex h-[108px] w-9 flex-col items-center justify-between rounded-lg bg-[#141414] py-[9px] text-[#808080] shadow-md">
                <button type="button" aria-label="组件"><Box className="size-[18px]" strokeWidth={2} /></button>
                <button type="button" aria-label="图库"><GalleryGlyph /></button>
                <button type="button" aria-label="模板"><PageGlyph /></button>
              </div>
              <button type="button" aria-label="收起侧栏" className="mt-auto flex size-[26px] items-center justify-center bg-[#121212] text-[#7a7a7a]">
                <ChevronsLeft className="size-4" strokeWidth={1.800} />
              </button>
            </main>
            <Properties />
          </div>
        </div>
      </div>

      <div className="fixed inset-0 flex items-center justify-center">
        <ExpressionDialog />
      </div>

      <div className="pointer-events-none absolute top-[456px] right-[9px] h-[170px] w-[434px]">
        <svg viewBox="0 0 434 134" className="h-[134px] w-[434px]" fill="none" stroke="#ef7f8b" strokeWidth="2" aria-hidden="true">
          <path d="M425 93v30a4 4 0 0 1-4 4H35a4 4 0 0 1-4-4V11a4 4 0 0 0-4-4H2" strokeDasharray="6 2" />
          <path d="M7 2L2 7l5 5" />
        </svg>
        <Note className="top-[141px] left-[308px]">1）表达式动态</Note>
      </div>
    </div>
  );
}
